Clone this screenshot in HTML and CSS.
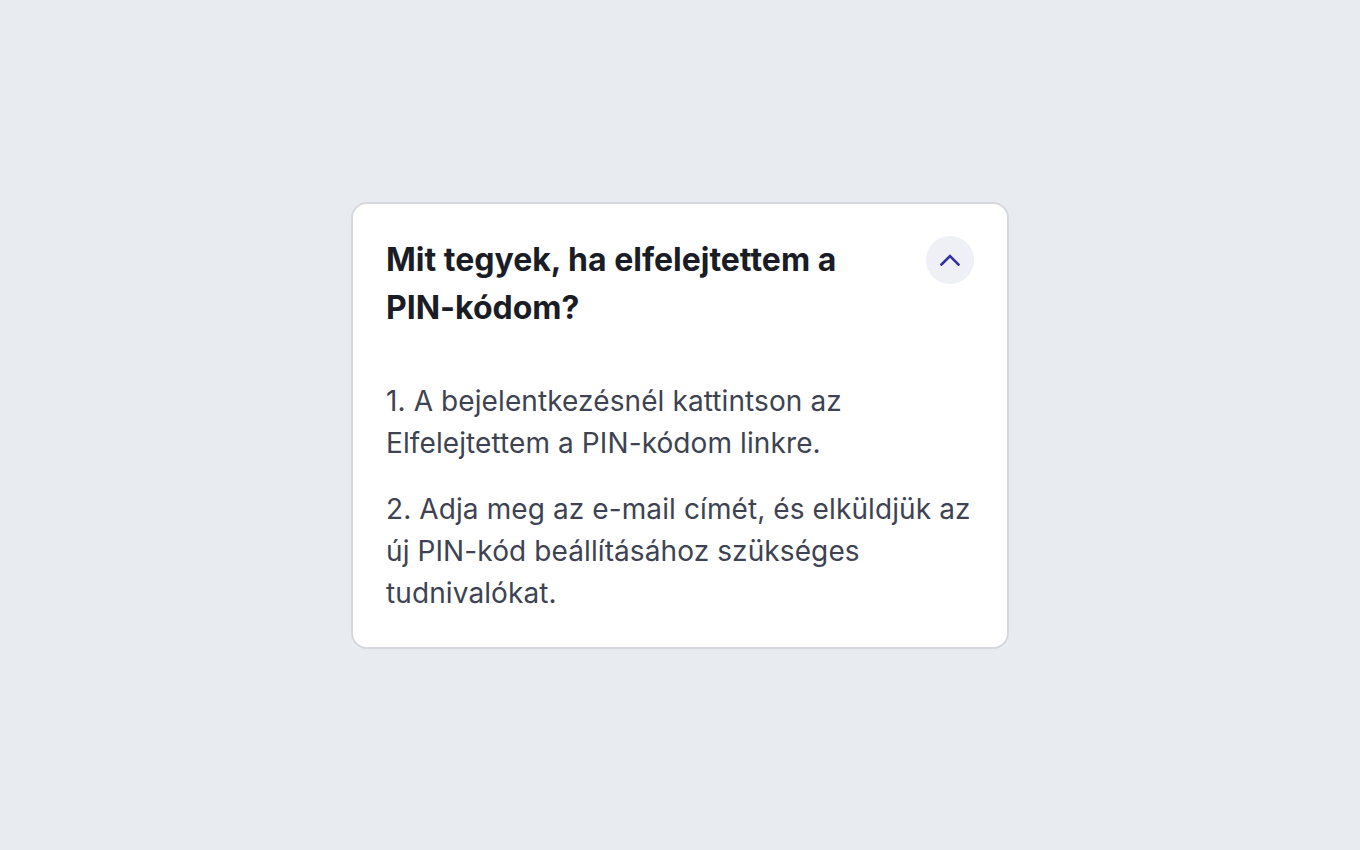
FILE: index.html
```html
<!DOCTYPE html>
<html lang="hu">
<head>
    <meta charset="UTF-8">
    <title>GYIK</title>
    <link rel="stylesheet" href="styles.css">
</head>
<body>
    <div class="faq">
        <div class="faq-fej">
            <h2>Mit tegyek, ha elfelejtettem a PIN-kódom?</h2>
            <button class="nyil" aria-label="Bezárás">
                <svg width="20" height="12" viewBox="0 0 20 12">
                    <polyline points="1.5,10.5 10,2 18.5,10.5" fill="none" stroke="#33309f" stroke-width="2.6" stroke-linecap="square" stroke-linejoin="miter"/>
                </svg>
            </button>
        </div>
        <div class="faq-valasz">
            <p>1. A bejelentkezésnél kattintson az Elfelejtettem a PIN-kódom linkre.</p>
            <p>2. Adja meg az e-mail címét, és elküldjük az új PIN-kód beállításához szükséges tudnivalókat.</p>
        </div>
    </div>
</body>
</html>
```

FILE: styles.css
```css
body {
    margin: 0;
    min-height: 100vh;
    display: flex;
    align-items: center;
    justify-content: center;
    background-color: #e8ebf0;
    font-family: Inter, "Noto Sans", sans-serif;
}
.faq {
    width: 658px;
    box-sizing: border-box;
    background: #fff;
    border: 2px solid #d5d8de;
    border-radius: 16px;
    padding: 32px 33px 33px 33px;
}
.faq-fej {
    display: flex;
    justify-content: space-between;
    align-items: flex-start;
    gap: 24px;
}
.faq-fej h2 {
    margin: 0;
    font-size: 32px;
    line-height: 48px;
    font-weight: 700;
    color: #1a1d26;
}
.nyil {
    flex: none;
    width: 48px;
    height: 48px;
    border: none;
    border-radius: 50%;
    background: #eef0f6;
    display: flex;
    align-items: center;
    justify-content: center;
    padding: 0;
    cursor: pointer;
}
.faq-valasz {
    margin-top: 48px;
}
.faq-valasz p {
    margin: 0;
    font-size: 28px;
    line-height: 42px;
    letter-spacing: 0.1px;
    color: #3d4352;
}
.faq-valasz p + p {
    margin-top: 24px;
}
```
